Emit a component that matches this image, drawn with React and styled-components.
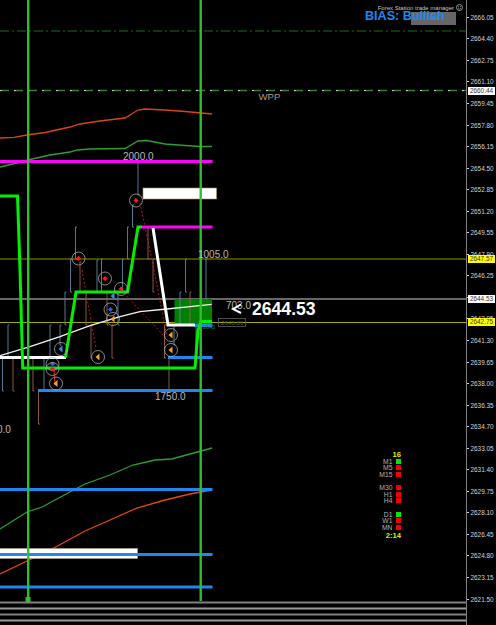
import React from "react";
import styled, { createGlobalStyle } from "styled-components";

const GlobalStyle = createGlobalStyle`
  html, body {
    margin: 0;
    padding: 0;
    background: #000;
  }
`;

const BLUE_BAR = "#5b86a6";
const BROWN_BAR = "#9a6248";
const RING = "#a8a8a8";

const ROW_HEIGHT = 21.556;

const axisPrices = [
  "2666.05", "2664.40", "2662.75", "2661.10", "2659.45", "2657.80", "2656.15",
  "2654.50", "2652.85", "2651.20", "2649.55", "2647.90", "2646.25", "2644.60",
  "2642.95", "2641.30", "2639.65", "2638.00", "2636.35", "2634.70", "2633.05",
  "2631.40", "2629.75", "2628.10", "2626.45", "2624.80", "2623.15", "2621.50",
];

const axisBadges = [
  { price: "2660.44", y: 87, bg: "#fff" },
  { price: "2647.57", y: 255, bg: "#ffff00" },
  { price: "2644.53", y: 295, bg: "#fff" },
  { price: "2642.75", y: 318, bg: "#ffff00" },
];

const timeframes = [
  [
    { name: "M1", up: true },
    { name: "M5" },
    { name: "M15" },
  ],
  [{ name: "M30" }, { name: "H1" }, { name: "H4" }],
  [{ name: "D1", up: true }, { name: "W1" }, { name: "MN" }],
];

// x, top, bottom, colour
const bars = [
  [2.5, 358, 391, 0], [8, 325, 357, 0], [13, 358, 391, 1], [21, 292, 325, 0],
  [33, 358, 391, 1], [38.5, 391, 424, 1], [44, 358, 391, 0], [50, 325, 357, 0],
  [60, 325, 345, 0], [65, 292, 325, 0], [70.5, 259, 292, 0], [75.5, 227, 259, 0],
  [80, 262, 292, 1], [86, 292, 325, 1], [91, 325, 358, 1], [97, 260, 292, 0],
  [101.5, 259, 292, 0], [107, 292, 325, 1], [112, 325, 358, 1], [118, 292, 325, 0],
  [122.5, 259, 292, 0], [127.5, 227, 259, 0], [132.5, 205, 227, 0], [138, 163, 195, 0],
  [148, 227, 259, 1], [153, 259, 292, 1], [164.5, 325, 358, 1], [169, 358, 390, 1],
  [174, 325, 345, 0], [180, 292, 325, 0], [185.5, 259, 292, 0], [190, 292, 325, 1],
  [196, 325, 358, 0], [206, 259, 299, 0],
];

const dashedLinks = [
  "140,203 154,270 167,337",
  "82,270 96,348",
  "121,290 165,337",
];

// x, y, kind of marker in the ring
const markers = [
  [136, 200.5, "red"], [78.5, 258.5, "red"], [105, 278.5, "red"], [121, 289, "red"],
  [110.5, 309.5, "blue"], [113, 319, "orange"], [113, 296, "blueArrow"],
  [61, 349, "blueArrow"], [52.5, 364, "blue"], [52.5, 369, "red"], [56, 383.5, "orange"],
  [98, 357, "orange"], [171, 335, "orange"], [171, 350, "orange"],
];

function Marker({ x, y, kind }) {
  const hasRing = kind !== "blueArrow" || x < 100;
  let inner;
  if (kind === "red" || kind === "blue") {
    const c = kind === "red" ? "#ff1a1a" : "#2a5cff";
    inner = <path d={`M${x - 2.5} ${y}L${x} ${y - 2.5}L${x + 2.5} ${y}L${x} ${y + 2.5}Z`} fill={c} />;
  } else {
    const c = kind === "orange" ? "#f5a623" : "#3b8de0";
    inner = <path d={`M${x - 2.5} ${y}L${x + 1.5} ${y - 3.5}L${x + 1.5} ${y + 3.5}Z`} fill={c} />;
  }
  return (
    <g>
      {hasRing && <circle cx={x} cy={y} r={6.5} fill="none" stroke={RING} strokeWidth={0.8} />}
      {inner}
    </g>
  );
}

function Bar({ x, top, bottom, brown }) {
  const c = brown ? BROWN_BAR : BLUE_BAR;
  return (
    <path d={`M${x + 1.5} ${top}H${x}V${bottom}H${x + 1.5}`} fill="none" stroke={c} strokeWidth={0.9} />
  );
}

function Chart() {
  return (
    <Plot width="466" height="625" viewBox="0 0 466 625">
      {/* long levels */}
      <line x1="0" x2="466" y1="31" y2="31" stroke="#1f6a1f" strokeWidth="1" strokeDasharray="9 3 2 3" />
      <line x1="0" x2="466" y1="90.5" y2="90.5" stroke="#3d7a3d" strokeWidth="1.4" strokeDasharray="9 5" />
      <line x1="0" x2="466" y1="90.5" y2="90.5" stroke="#c9c9c9" strokeWidth="1" strokeDasharray="2 12" />
      <line x1="0" x2="466" y1="259" y2="259" stroke="#8f8f00" strokeWidth="1" />
      <line x1="0" x2="466" y1="299" y2="299" stroke="#8a8a8a" strokeWidth="1.5" />
      <line x1="0" x2="466" y1="322.5" y2="322.5" stroke="#a8a800" strokeWidth="1" />

      {/* moving averages */}
      <polyline fill="none" stroke="#d9450c" strokeWidth="1.3" points="0,138 14,137.3 27,135 45,132.5 70,127 80,124 100,121 125,118 138,110 145,109 165,110 185,111.5 212,114" />
      <polyline fill="none" stroke="#2f9e2f" strokeWidth="1.3" points="0,167 17,163 28,160 50,155 70,152 77,150 90,149 125,148.5 138,141 147,140.5 165,144 185,145.5 200,146.5 212,146.5" />
      <polyline fill="none" stroke="#2f9e2f" strokeWidth="1.3" points="0,529 27,512 42,507 70,492 85,484 110,475 133,465 155,460 172,459 190,454 212,448" />
      <polyline fill="none" stroke="#e8480c" strokeWidth="1.3" points="0,574 27,561 52,549 85,531 110,520 137,508 165,500 190,494 212,490" />

      {/* zone boxes */}
      <rect x="143" y="188" width="73.5" height="11" fill="#fff" stroke="#b98a70" strokeWidth="0.6" />
      <rect x="-2" y="548.5" width="139.5" height="10" fill="#fff" stroke="#b9a090" strokeWidth="0.6" />
      <rect x="174.5" y="299" width="37.5" height="25" fill="#008000" />

      {bars.map(([x, top, bottom, brown]) => (
        <Bar key={x} x={x} top={top} bottom={bottom} brown={brown} />
      ))}

      {dashedLinks.map((points) => (
        <polyline key={points} points={points} fill="none" stroke="#c81e1e" strokeWidth="0.9" strokeDasharray="2 2" />
      ))}
      <line x1="54" x2="55" y1="370" y2="385" stroke="#e02020" strokeWidth="1" />

      {/* levels */}
      <rect x="0" y="160" width="212.5" height="3" fill="#ff00ff" />
      <rect x="142" y="225.5" width="70.5" height="3" fill="#ff00ff" />
      <rect x="0" y="488" width="212.5" height="3" fill="#1e88f0" />
      <rect x="0" y="553" width="212.5" height="3" fill="#1e88f0" />
      <rect x="0" y="585.5" width="212.5" height="3" fill="#1e88f0" />
      <rect x="38" y="389" width="174.5" height="3" fill="#1e88f0" />
      <rect x="168" y="356" width="44.5" height="3" fill="#1e88f0" />
      <rect x="194" y="324" width="18.5" height="3" fill="#1e88f0" />

      <polyline fill="none" stroke="#f2f2f2" strokeWidth="1.3" points="0,355.7 30,346.7 60,336.7 90,325.7 120,316.7 140,311.7 166.7,309 190,306.7 211.7,304.3" />

      {/* trend steps */}
      <polyline fill="none" stroke="#fff" strokeWidth="3" points="0,357.5 66,357.5" />
      <polyline fill="none" stroke="#fff" strokeWidth="3" points="153,228 168,325 195,325" />
      <polyline fill="none" stroke="#00f000" strokeWidth="3" strokeLinejoin="miter" points="-3,196 17.5,196 20,270 22.7,368 195,368 198,330 201,321.5 212,321.5" />
      <polyline fill="none" stroke="#00f000" strokeWidth="3" strokeLinejoin="miter" points="65.5,357.5 76,292 127.5,292 138,227 142,227" />

      {markers.map(([x, y, kind]) => (
        <Marker key={`${x}-${y}`} x={x} y={y} kind={kind} />
      ))}

      {/* session lines */}
      <rect x="27" y="0" width="2.4" height="601" fill="#2fbf2f" />
      <rect x="199.5" y="0" width="2.4" height="601" fill="#2fbf2f" />
      <rect x="25.5" y="597" width="5" height="5" fill="#2fbf2f" />

      <ChartText x="123" y="160" fontSize="10">2000.0</ChartText>
      <ChartText x="198" y="257.5" fontSize="10">1005.0</ChartText>
      <ChartText x="155" y="400" fontSize="10">1750.0</ChartText>
      <ChartText x="-3" y="432.5" fontSize="10">0.0</ChartText>
      <ChartText x="226" y="308.5" fontSize="10">703.0</ChartText>
      <ChartText x="258.5" y="99.5" fontSize="9.6" $tone="#a89a80">WPP</ChartText>

      <path d="M241 304.5L233 309L241 313" fill="none" stroke="#fff" strokeWidth="2" />

      <rect x="218.5" y="318.5" width="27" height="8" fill="none" stroke="#5c5c5c" strokeWidth="0.8" />
      <ChartText x="221" y="325" fontSize="6.2" $tone="#555">2643.86</ChartText>
      <ChartText x="203" y="329" fontSize="5.5" $tone="#1a8a3a">2642</ChartText>

      {/* stripes along the foot of the chart */}
      <rect x="0" y="601.5" width="466" height="2" fill="#808080" />
      <rect x="0" y="607.5" width="466" height="2" fill="#9a9a9a" />
      <rect x="0" y="613.5" width="466" height="2" fill="#808080" />
      <rect x="0" y="619.5" width="466" height="2" fill="#9a9a9a" />
    </Plot>
  );
}

function App() {
  return (
    <>
      <GlobalStyle />
      <Page>
        <ChartArea>
          <Chart />
          <Manager>
            Forex Station trade manager
            <svg width="7" height="7" viewBox="0 0 7 7">
              <circle cx="3.5" cy="3.5" r="3" fill="none" stroke="#bbb" strokeWidth="0.8" />
              <circle cx="2.4" cy="2.8" r="0.5" fill="#bbb" />
              <circle cx="4.6" cy="2.8" r="0.5" fill="#bbb" />
              <path d="M2 4.5Q3.5 5.6 5 4.5" fill="none" stroke="#bbb" strokeWidth="0.6" />
            </svg>
          </Manager>
          <GhostButton>Hide</GhostButton>
          <Bias>BIAS: Bullish</Bias>
          <LastPrice>2644.53</LastPrice>
          <Signals>
            <Score>16</Score>
            {timeframes.map((group) => (
              <SignalGroup key={group[0].name}>
                {group.map((tf) => (
                  <SignalRow key={tf.name}>
                    <SignalName>{tf.name}</SignalName>
                    <SignalBox $up={tf.up} />
                  </SignalRow>
                ))}
              </SignalGroup>
            ))}
            <Score>2:14</Score>
          </Signals>
        </ChartArea>
        <PriceAxis>
          {axisPrices.map((price) => (
            <AxisRow key={price}>{price}</AxisRow>
          ))}
          {axisBadges.map((badge) => (
            <AxisBadge key={badge.price} $y={badge.y} $bg={badge.bg}>
              {badge.price}
            </AxisBadge>
          ))}
        </PriceAxis>
      </Page>
    </>
  );
}

const Page = styled.div`
  display: flex;
  width: 496px;
  height: 625px;
  background: #000;
  overflow: hidden;
  font-family: "Liberation Sans", Arial, sans-serif;
`;

const ChartArea = styled.div`
  position: relative;
  width: 466px;
  height: 625px;
  flex: none;
`;

const Plot = styled.svg`
  display: block;
`;

const ChartText = styled.text`
  font-family: "Liberation Sans", Arial, sans-serif;
  fill: ${(p) => p.$tone || "#b8b8b8"};
`;

const Manager = styled.div`
  position: absolute;
  top: 3.5px;
  right: 3px;
  display: flex;
  align-items: center;
  gap: 2px;
  font-size: 6px;
  line-height: 8px;
  color: #c4c4c4;
  white-space: nowrap;
`;

const GhostButton = styled.div`
  position: absolute;
  top: 12px;
  left: 411px;
  width: 45px;
  height: 13px;
  background: #666;
  color: #888;
  font-size: 6px;
  line-height: 13px;
  text-align: center;
`;

const Bias = styled.div`
  position: absolute;
  top: 8px;
  left: 365px;
  font-size: 12.6px;
  line-height: 16px;
  font-weight: 700;
  color: #1e88f0;
  white-space: nowrap;
`;

const LastPrice = styled.div`
  position: absolute;
  top: 298px;
  left: 252px;
  font-size: 17.6px;
  line-height: 22px;
  font-weight: 700;
  color: #fff;
`;

const Signals = styled.div`
  position: absolute;
  top: 451px;
  left: 370px;
  width: 31px;
  display: flex;
  flex-direction: column;
  align-items: flex-end;
  gap: 7px;
`;

const Score = styled.div`
  font-size: 7.6px;
  line-height: 7px;
  font-weight: 700;
  color: #e6e600;
  margin-bottom: -7px;
  &:last-child {
    margin: -6px 0 0;
  }
`;

const SignalGroup = styled.div`
  display: flex;
  flex-direction: column;
`;

const SignalRow = styled.div`
  display: flex;
  align-items: center;
  justify-content: flex-end;
  gap: 3.5px;
  height: 6.5px;
`;

const SignalName = styled.span`
  font-size: 6.8px;
  color: #b4b4b4;
`;

const SignalBox = styled.span`
  width: 5px;
  height: 5px;
  background: ${(p) => (p.$up ? "#00e600" : "#f00000")};
`;

const PriceAxis = styled.div`
  position: relative;
  box-sizing: border-box;
  flex: 1;
  height: 625px;
  padding-top: 6.5px;
  border-left: 1.5px solid #808080;
  display: flex;
  flex-direction: column;
`;

const AxisRow = styled.div`
  display: flex;
  align-items: center;
  height: ${ROW_HEIGHT}px;
  flex: none;
  font-size: 6.4px;
  color: #d6d6d6;
  &::before {
    content: "";
    width: 2px;
    height: 1px;
    margin-right: 1.5px;
    background: #d6d6d6;
  }
`;

const AxisBadge = styled.div`
  position: absolute;
  left: 1px;
  top: ${(p) => p.$y}px;
  width: 27px;
  height: 8px;
  line-height: 8px;
  text-align: center;
  font-size: 6.4px;
  color: #333;
  background: ${(p) => p.$bg};
`;

export default App;
